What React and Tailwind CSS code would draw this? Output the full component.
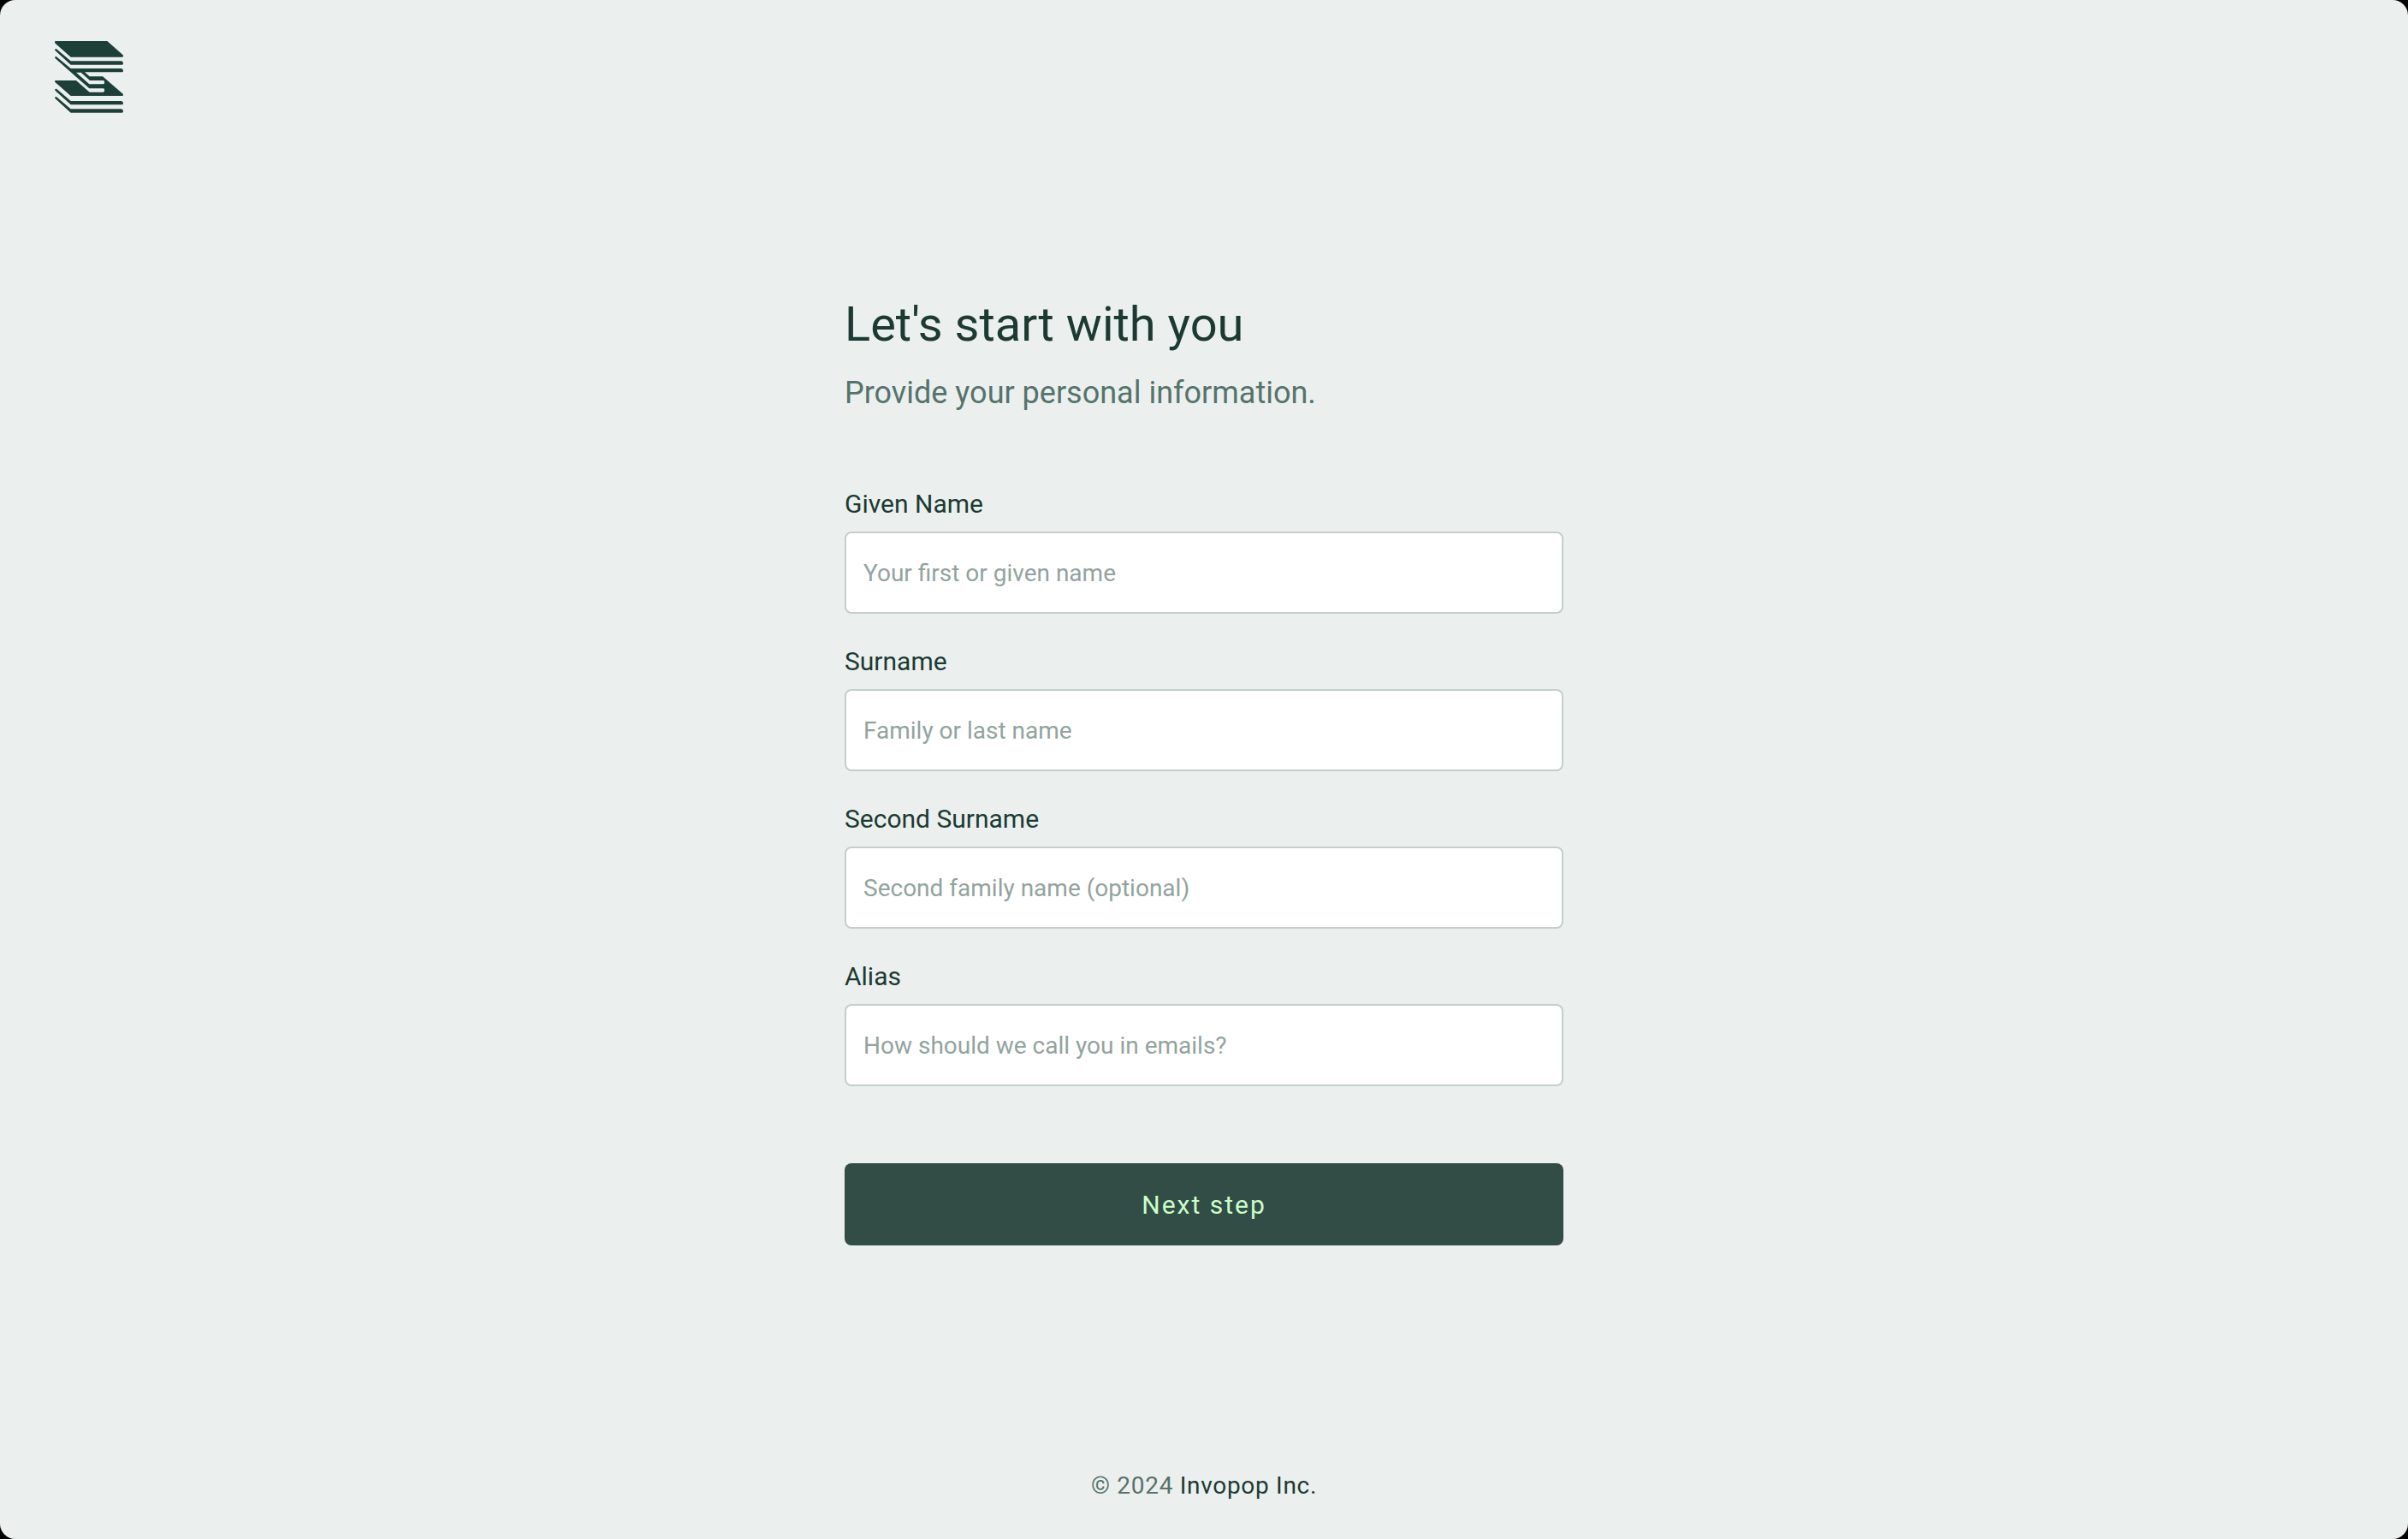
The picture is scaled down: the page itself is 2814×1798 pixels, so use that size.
const fields = [
  { id: "given", label: "Given Name", placeholder: "Your first or given name" },
  { id: "surname", label: "Surname", placeholder: "Family or last name" },
  { id: "surname2", label: "Second Surname", placeholder: "Second family name (optional)" },
  { id: "alias", label: "Alias", placeholder: "How should we call you in emails?" },
];

function Logo() {
  return (
    <svg viewBox="42 39 240 252" className="h-21 w-20" fill="#1c4038" fillRule="evenodd" aria-hidden="true">
      <path d="M45 39H226L281 88Q284 95 278 95H98L44 47Q39 41 45 39Z" />
      <path d="M44 73Q41 69 44 67Q47 65 50 68L98 109H276Q282 111 282 117Q282 122 278 122H98Z" />
      <path d="M44 100Q41 96 44 94Q47 92 50 95L98 135H276Q282 137 282 143Q282 148 278 148H147L164 163H210L281 224Q284 231 278 231H98L44 184Q39 179 45 177H117L164 218H211Q216 218 216 213V209Q216 205 211 205H163L98 148ZM117 149L163 190H211Q216 190 216 186V181Q216 177 211 177H165L134 149Z" />
      <path d="M44 213Q41 209 44 207Q47 205 50 208L98 249H276Q282 251 282 257Q282 262 278 262H98Z" />
      <path d="M44 241Q41 237 44 235Q47 233 50 236L98 277H276Q282 279 282 285Q282 290 278 290H98Z" />
    </svg>
  );
}

export default function App() {
  return (
    <div className="bg-black">
      <div className="flex min-h-screen flex-col rounded-[18px] bg-[#ebf0ef] font-[Roboto,sans-serif] text-[#1c3a32]">
        <header className="px-16 pt-12 pb-4">
          <a href="#" aria-label="Invopop" className="block w-20">
            <Logo />
          </a>
        </header>

        <main className="flex flex-1 flex-col items-center justify-center">
          <form className="w-full max-w-[840px]" onSubmit={(e) => e.preventDefault()}>
            <h1 className="text-[56px] leading-16">Let's start with you</h1>
            <p className="mt-6 text-[36px] leading-12 text-[#56736b]">Provide your personal information.</p>

            <div className="mt-[86px] flex flex-col gap-9">
              {fields.map((f) => (
                <div key={f.id} className="flex flex-col gap-3">
                  <label htmlFor={f.id} className="text-[30px] leading-10">
                    {f.label}
                  </label>
                  <input
                    id={f.id}
                    type="text"
                    placeholder={f.placeholder}
                    className="h-24 w-full rounded-lg border-2 border-[#c4cecb] bg-white px-5 text-[28px] placeholder:text-[#92a39e]"
                  />
                </div>
              ))}
            </div>

            <button
              type="submit"
              className="mt-[90px] h-24 w-full rounded-lg bg-[#314d46] text-[30px] tracking-[2px] text-[#cdfdc9]"
            >
              Next step
            </button>
          </form>
        </main>

        <footer className="pt-[62px] pb-[42px] text-center text-[28px] leading-10 tracking-wide text-[#56736b]">
          © 2024{" "}
          <a href="#" className="text-[#1c3a32]">
            Invopop Inc.
          </a>
        </footer>
      </div>
    </div>
  );
}
